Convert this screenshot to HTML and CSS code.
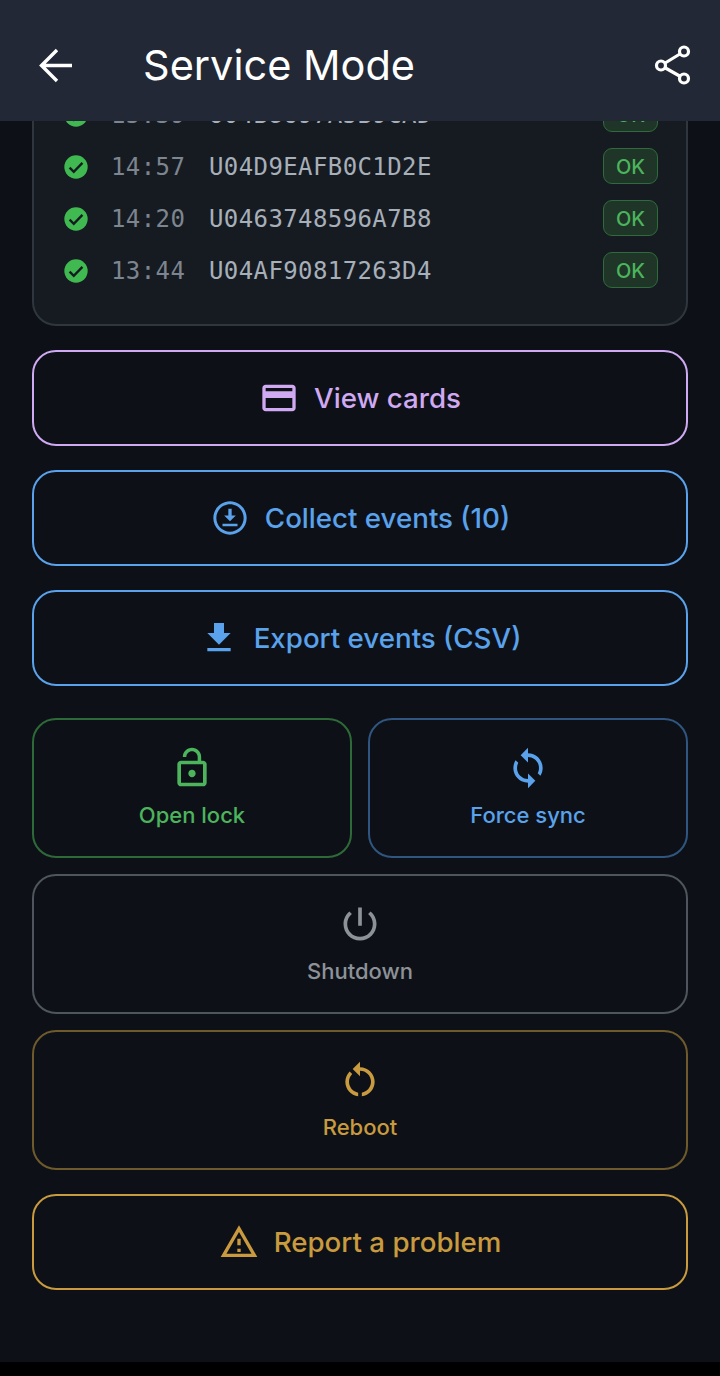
FILE: index.html
```html
<!DOCTYPE html>
<html lang="en">

<head>
    <meta charset="UTF-8">
    <title>Service Mode</title>
    <link rel="stylesheet" href="styles.css">
</head>

<body>
    <div class="screen">
        <header class="top-bar">
            <button class="bar-button" type="button" aria-label="Back">
                <svg class="back-icon" viewBox="0 0 48 48"><path d="M40 24.500H10M25 9 9.500 24.500 25 40" /></svg>
            </button>
            <h1 class="title">Service Mode</h1>
            <button class="bar-button share" type="button" aria-label="Share">
                <svg class="share-icon" viewBox="0 0 40 40">
                    <path d="M9 20.500 32 6.500M9 20.500l23 13" />
                    <circle cx="9" cy="20.500" r="4.500" />
                    <circle cx="32" cy="6.500" r="4.500" />
                    <circle cx="32" cy="33.500" r="4.500" />
                </svg>
            </button>
        </header>

        <main class="content">
            <section class="events-card">
                <div class="event-row">
                    <svg class="check-icon" viewBox="0 0 24 24"><circle cx="12" cy="12" r="10" /><path class="tick" d="m6.5 12.5 3.6 3.6 7.4-7.6" /></svg>
                    <span class="event-time">15:39</span>
                    <span class="event-uid">U04B8697A5B9CAD</span>
                    <span class="event-status">OK</span>
                </div>
                <div class="event-row">
                    <svg class="check-icon" viewBox="0 0 24 24"><circle cx="12" cy="12" r="10" /><path class="tick" d="m6.5 12.5 3.6 3.6 7.4-7.6" /></svg>
                    <span class="event-time">14:57</span>
                    <span class="event-uid">U04D9EAFB0C1D2E</span>
                    <span class="event-status">OK</span>
                </div>
                <div class="event-row">
                    <svg class="check-icon" viewBox="0 0 24 24"><circle cx="12" cy="12" r="10" /><path class="tick" d="m6.5 12.5 3.6 3.6 7.4-7.6" /></svg>
                    <span class="event-time">14:20</span>
                    <span class="event-uid">U0463748596A7B8</span>
                    <span class="event-status">OK</span>
                </div>
                <div class="event-row">
                    <svg class="check-icon" viewBox="0 0 24 24"><circle cx="12" cy="12" r="10" /><path class="tick" d="m6.5 12.5 3.6 3.6 7.4-7.6" /></svg>
                    <span class="event-time">13:44</span>
                    <span class="event-uid">U04AF90817263D4</span>
                    <span class="event-status">OK</span>
                </div>
            </section>

            <div class="wide-actions">
                <button class="wide-button purple" type="button">
                    <svg class="icon" viewBox="0 0 24 24"><path d="M20 4H4c-1.11 0-1.99.89-1.99 2L2 18c0 1.11.89 2 2 2h16c1.11 0 2-.89 2-2V6c0-1.11-.89-2-2-2zm0 14H4v-6h16v6zm0-10H4V6h16v2z" /></svg>
                    View cards
                </button>
                <button class="wide-button blue" type="button">
                    <svg class="icon" viewBox="0 0 24 24"><path d="M12 2C6.48 2 2 6.48 2 12s4.48 10 10 10 10-4.48 10-10S17.52 2 12 2zm0 18.200c-4.530 0-8.200-3.670-8.200-8.200S7.470 3.800 12 3.800s8.200 3.670 8.200 8.200-3.670 8.200-8.200 8.200zM11 6.500h2v4h2.500L12 14l-3.500-3.500H11v-4zm-3.500 9h9v1.500h-9v-1.500z" /></svg>
                    Collect events (10)
                </button>
                <button class="wide-button blue" type="button">
                    <svg class="icon" viewBox="0 0 24 24"><path d="M19 9h-4V3H9v6H5l7 7 7-7zM5 18v2h14v-2H5z" /></svg>
                    Export events (CSV)
                </button>
            </div>

            <div class="tile-grid">
                <button class="tile green" type="button">
                    <svg class="icon" viewBox="0 0 24 24"><path d="M12 17c1.100 0 2-.9 2-2s-.9-2-2-2-2 .9-2 2 .9 2 2 2zm6-9h-1V6c0-2.760-2.240-5-5-5S7 3.240 7 6h1.900c0-1.710 1.390-3.100 3.100-3.100 1.710 0 3.100 1.390 3.100 3.100v2H6c-1.100 0-2 .9-2 2v10c0 1.100.9 2 2 2h12c1.100 0 2-.9 2-2V10c0-1.100-.9-2-2-2zm0 12H6V10h12v10z" /></svg>
                    <span>Open lock</span>
                </button>
                <button class="tile dim-blue" type="button">
                    <svg class="icon" viewBox="0 0 24 24"><path d="M12 4V1L8 5l4 4V6c3.310 0 6 2.690 6 6 0 1.010-.25 1.970-.7 2.800l1.460 1.460C19.540 15.030 20 13.570 20 12c0-4.420-3.580-8-8-8zm0 14c-3.310 0-6-2.690-6-6 0-1.010.25-1.970.7-2.800L5.240 7.740C4.460 8.970 4 10.430 4 12c0 4.420 3.580 8 8 8v3l4-4-4-4v3z" /></svg>
                    <span>Force sync</span>
                </button>
                <button class="tile grey span-two" type="button">
                    <svg class="icon" viewBox="0 0 24 24"><path d="M13 3h-2v10h2V3zm4.830 2.170-1.420 1.420C17.990 7.860 19 9.810 19 12c0 3.870-3.130 7-7 7s-7-3.130-7-7c0-2.190 1.010-4.140 2.580-5.420L6.170 5.170C4.230 6.820 3 9.260 3 12c0 4.970 4.030 9 9 9s9-4.030 9-9c0-2.740-1.230-5.180-3.170-6.830z" /></svg>
                    <span>Shutdown</span>
                </button>
                <button class="tile dim-amber span-two" type="button">
                    <svg class="icon" viewBox="0 0 24 24"><path d="M12 5V2L8 6l4 4V7c3.310 0 6 2.690 6 6 0 2.970-2.170 5.430-5 5.910v2.020c3.950-.49 7-3.860 7-7.930 0-4.420-3.580-8-8-8zm-6 8c0-1.650.67-3.150 1.760-4.240L6.340 7.340C4.900 8.790 4 10.790 4 13c0 4.080 3.050 7.440 7 7.930v-2.020c-2.830-.48-5-2.940-5-5.910z" /></svg>
                    <span>Reboot</span>
                </button>
            </div>

            <button class="wide-button amber" type="button">
                <svg class="icon" viewBox="0 0 24 24"><path d="M12 5.990 19.530 19H4.470L12 5.990M12 2 1 21h22L12 2zm1 14h-2v2h2v-2zm0-6h-2v4h2v-4z" /></svg>
                Report a problem
            </button>
        </main>

        <div class="nav-strip"></div>
    </div>
</body>

</html>
```

FILE: styles.css
```css
* {
    box-sizing: border-box;
}

body {
    margin: 0;
    background-color: #0d1117;
    font-family: 'Inter', Arial, Helvetica, sans-serif;
}

button {
    font-family: inherit;
    background: none;
    cursor: pointer;
}

.screen {
    height: 1376px;
    display: flex;
    flex-direction: column;
    overflow: hidden;
}

.top-bar {
    flex: none;
    height: 121px;
    padding: 8px 28px 0 32px;
    display: flex;
    align-items: center;
    background-color: #222835;
}

.bar-button {
    padding: 0;
    border: none;
    display: flex;
}

.back-icon {
    width: 48px;
    height: 48px;
    fill: none;
    stroke: #fff;
    stroke-width: 3.4;
}

.title {
    flex: 1;
    margin: 0 0 0 63px;
    color: #fff;
    font-size: 41.5px;
    font-weight: 400;
}

.share-icon {
    width: 40px;
    height: 40px;
    fill: #222835;
    stroke: #fff;
    stroke-width: 3.2;
}

.content {
    flex: 1;
    min-height: 0;
    padding: 0 32px;
    display: flex;
    flex-direction: column;
    overflow: hidden;
}

/* the list is scrolled, so its first row goes under the top bar */
.events-card {
    flex: none;
    margin-top: -42px;
    padding: 8px 28px 27px 28px;
    display: flex;
    flex-direction: column;
    background-color: #161b22;
    border: 2px solid #30363d;
    border-radius: 24px;
}

.event-row {
    height: 52px;
    display: flex;
    align-items: center;
}

.check-icon {
    flex: none;
    width: 28px;
    height: 28px;
    fill: #3fb950;
}

.tick {
    fill: none;
    stroke: #161b22;
    stroke-width: 2;
}

.event-time,
.event-uid {
    font-family: 'DejaVu Sans Mono', monospace;
    font-size: 24px;
    letter-spacing: 0.4px;
}

.event-time {
    margin-left: 21px;
    width: 98px;
    color: #7d858f;
}

.event-uid {
    flex: 1;
    color: #a7afb9;
}

.event-status {
    width: 55px;
    height: 36px;
    margin-bottom: 2px;
    padding-top: 2px;
    display: flex;
    align-items: center;
    justify-content: center;
    color: #4cb45c;
    font-size: 20px;
    font-weight: 500;
    background-color: #1f3527;
    border: 1px solid #2f6b3c;
    border-radius: 9px;
}

.wide-actions {
    flex: none;
    margin: 24px 0 32px;
    display: flex;
    flex-direction: column;
    gap: 24px;
}

.wide-button {
    flex: none;
    width: 100%;
    height: 96px;
    display: flex;
    align-items: center;
    justify-content: center;
    gap: 15px;
    font-size: 27.7px;
    font-weight: 500;
    border: 2px solid;
    border-radius: 24px;
}

.icon {
    flex: none;
    width: 40px;
    height: 40px;
    fill: currentColor;
}

.tile-grid {
    flex: none;
    margin-bottom: 24px;
    display: grid;
    grid-template-columns: 1fr 1fr;
    gap: 16px;
}

.tile {
    height: 140px;
    padding-bottom: 3px;
    display: flex;
    flex-direction: column;
    align-items: center;
    justify-content: center;
    gap: 12px;
    font-size: 22px;
    font-weight: 500;
    border: 2px solid;
    border-radius: 24px;
}

.tile .icon {
    width: 44px;
    height: 44px;
}

.span-two {
    grid-column: span 2;
}

.purple {
    color: #cfa9f2;
    border-color: #cfa9f2;
}

.blue {
    color: #5aa2ec;
    border-color: #5aa2ec;
}

.amber {
    color: #c99a3e;
    border-color: #c99a3e;
}

.green {
    color: #4cb45c;
    border-color: #2e6a38;
}

.dim-blue {
    color: #5aa2ec;
    border-color: #2f5580;
}

.grey {
    color: #8d9299;
    border-color: #4f555c;
}

.dim-amber {
    color: #c99a3e;
    border-color: #6f5a2c;
}

.nav-strip {
    flex: none;
    height: 14px;
    background-color: #000;
}
```
